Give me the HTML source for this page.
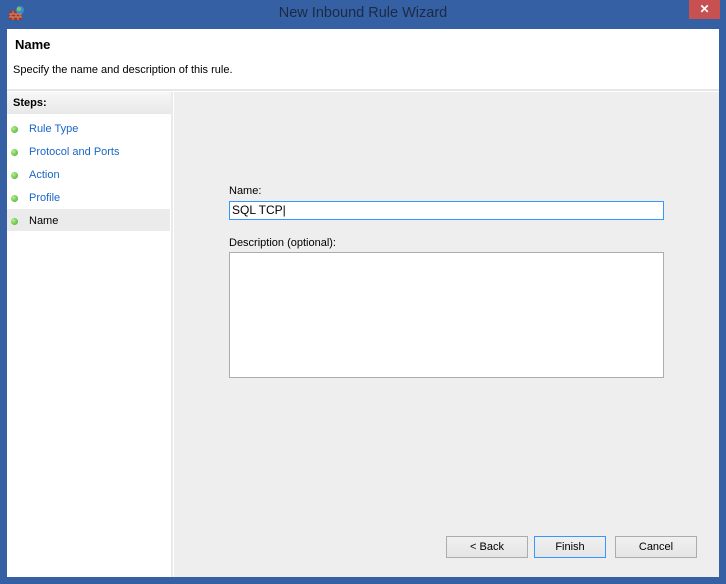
<!DOCTYPE html>
<html><head><style>
body{margin:0;width:726px;height:584px;background:#3660a4;position:relative;overflow:hidden;font-family:"Liberation Sans",sans-serif;font-size:11px;}
.a{position:absolute;}
.title{left:0;top:5px;width:726px;text-align:center;font-size:14.5px;color:#1c2a44;}
.close{left:689px;top:0;width:31px;height:19px;background:#c75050;color:#fff;text-align:center;font-size:12px;line-height:19px;font-weight:bold;}
.win{left:7px;top:29px;width:712px;height:548px;background:#fff;}
.btn{height:20px;border:1px solid #acacac;background:linear-gradient(#f0f0f0,#e5e5e5);text-align:center;line-height:20px;color:#000;}
.step{left:22px;color:#1a66c8;}
.dot{left:4px;width:7px;height:7px;border-radius:50%;background:radial-gradient(circle at 35% 35%,#b6f08a,#3fa82a);}
</style></head><body>
<div class="a title">New Inbound Rule Wizard</div>
<div class="a close">✕</div>
<svg class="a" style="left:8px;top:5px" width="18" height="16"><rect x="1" y="6" width="13" height="9" fill="#9c3a2a"/><path d="M1 9h13M1 12h13M5 6v3M10 6v3M3 9v3M8 9v3M12 9v3M5 12v3M10 12v3" stroke="#d88a70" stroke-width="1"/><circle cx="12" cy="5" r="4" fill="#3a8ad8"/><circle cx="11" cy="4" r="2" fill="#7cc84a"/></svg>
<div class="a win">
<div class="a" style="left:8px;top:8px;font-size:13px;font-weight:bold;color:#000">Name</div>
<div class="a" style="left:6px;top:35px;color:#000">Specify the name and description of this rule.</div>
<div class="a" style="left:0;top:60px;width:712px;height:2px;background:#e6e6e6"></div>
<div class="a" style="left:0;top:63px;width:164px;height:485px;background:#fff;border-right:2px solid #eaeaea"></div>
<div class="a" style="left:0;top:63px;width:164px;height:22px;background:linear-gradient(#f7f7f7,#e8e8e8)"></div>
<div class="a" style="left:6px;top:68px;font-weight:bold;color:#000">Steps:</div>
<div class="a" style="left:0;top:180px;width:163px;height:22px;background:#ebebeb"></div>
<div class="a dot" style="top:97px"></div><div class="a step" style="top:94px">Rule Type</div>
<div class="a dot" style="top:120px"></div><div class="a step" style="top:117px">Protocol and Ports</div>
<div class="a dot" style="top:143px"></div><div class="a step" style="top:140px">Action</div>
<div class="a dot" style="top:166px"></div><div class="a step" style="top:163px">Profile</div>
<div class="a dot" style="top:189px"></div><div class="a step" style="top:186px;color:#000">Name</div>
<div class="a" style="left:167px;top:63px;width:545px;height:485px;background:#eeeeee"></div>
<div class="a" style="left:222px;top:156px;color:#000">Name:</div>
<div class="a" style="left:222px;top:172px;height:17px;background:#fff;border:1px solid #3399ff;font-size:12px;line-height:17px;padding-left:2px;width:431px">SQL TCP|</div>
<div class="a" style="left:222px;top:208px;color:#000">Description (optional):</div>
<div class="a" style="left:222px;top:223px;width:433px;height:124px;background:#fff;border:1px solid #abadb3"></div>
<div class="a btn" style="left:439px;top:507px;width:80px">&lt; Back</div>
<div class="a btn" style="left:527px;top:507px;width:70px;border-color:#3399ff">Finish</div>
<div class="a btn" style="left:608px;top:507px;width:80px">Cancel</div>
</div>
</body></html>
